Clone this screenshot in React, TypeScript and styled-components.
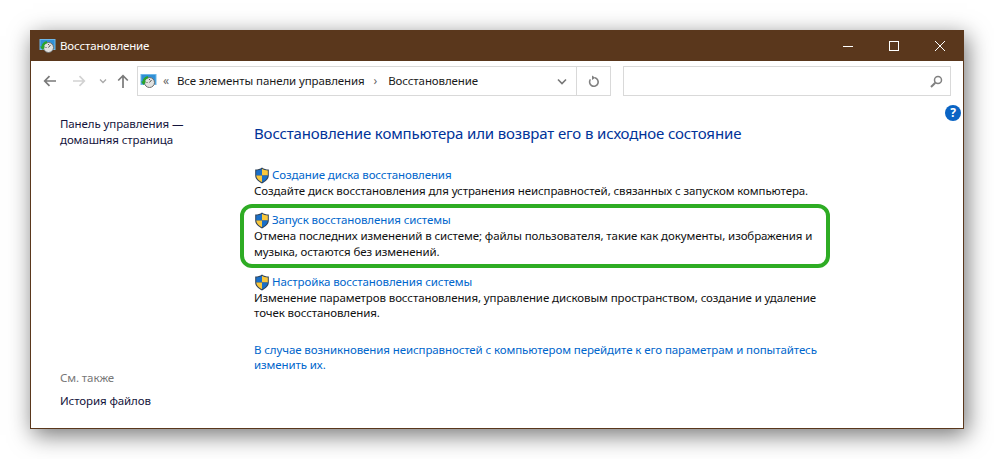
import React from "react";
import styled, { createGlobalStyle } from "styled-components";

const Global = createGlobalStyle`
  html, body { margin: 0; padding: 0; background: #fff; }
  body { width: 994px; height: 459px; overflow: hidden; font-family: "Noto Sans", "Open Sans", sans-serif; }
`;

const Page = styled.div`
  padding: 30px 30px 0;
`;

const Window = styled.div`
  width: 934px;
  height: 399px;
  box-sizing: border-box;
  display: flex;
  flex-direction: column;
  background: #fff;
  border: 1px solid #5a371c;
  border-top: 0;
  box-shadow: 3px 6px 22px rgba(0, 0, 0, 0.55);
`;

const TitleBar = styled.div`
  height: 31px;
  margin: 0 -1px;
  flex: none;
  display: flex;
  align-items: center;
  padding: 0 1px 0 9px;
  background: #5a371c;
  color: #fff;
  font-size: 11.5px;
  letter-spacing: -0.14px;
`;

const TitleText = styled.span`
  margin-left: 4px;
  flex: 1;
`;

const WinButton = styled.button`
  width: 46px;
  height: 31px;
  padding: 0;
  display: flex;
  align-items: center;
  justify-content: center;
  background: none;
  border: 0;
`;

const Toolbar = styled.div`
  height: 40px;
  flex: none;
  display: flex;
  align-items: center;
  padding: 0 12px 0 7px;
  box-sizing: border-box;
`;

const NavButton = styled.div`
  display: flex;
  align-items: center;
  justify-content: center;
  width: ${(p) => p.$w}px;
  height: 24px;
`;

const AddressBox = styled.div`
  width: 475px;
  height: 30px;
  box-sizing: border-box;
  display: flex;
  align-items: center;
  border: 1px solid #d9d9d9;
  font-size: 11.5px;
  letter-spacing: -0.1px;
  color: #1a1a1a;
`;

const Crumbs = styled.div`
  flex: 1;
  display: flex;
  align-items: center;
  padding: 0 0 1px 2px;
  min-width: 0;
`;

const CrumbSep = styled.span`
  color: #666;
  margin: 0 ${(p) => p.$l}px 0 ${(p) => p.$m}px;
  font-size: 12px;
`;

const AddressDrop = styled.div`
  width: 28px;
  height: 100%;
  display: flex;
  align-items: center;
  justify-content: center;
`;

const RefreshBtn = styled.div`
  width: 33px;
  height: 100%;
  display: flex;
  align-items: center;
  justify-content: center;
  border-left: 1px solid #d9d9d9;
`;

const SearchBox = styled.div`
  width: 328px;
  height: 30px;
  margin-left: 12px;
  box-sizing: border-box;
  display: flex;
  align-items: center;
  justify-content: flex-end;
  padding-right: 7px;
  border: 1px solid #d9d9d9;
`;

const Body = styled.div`
  flex: 1;
  display: flex;
  position: relative;
  min-height: 0;
`;

const Sidebar = styled.div`
  width: 223px;
  flex: none;
  box-sizing: border-box;
  padding: 15px 0 19px 29px;
  display: flex;
  flex-direction: column;
  font-size: 11.5px;
  letter-spacing: -0.1px;
  line-height: 16px;
  color: #14143c;
`;

const SideSpacer = styled.div`
  flex: 1;
`;

const SeeAlso = styled.div`
  color: #777;
  margin-bottom: 7px;
`;

const Main = styled.div`
  flex: 1;
  padding-top: 22px;
  font-size: 11.5px;
  letter-spacing: -0.1px;
  line-height: 16px;
  color: #111;
`;

const Heading = styled.h1`
  margin: 0 0 24px;
  font-size: 15px;
  letter-spacing: -0.14px;
  line-height: 20px;
  font-weight: 400;
  color: #003399;
`;

const Task = styled.div`
  margin-bottom: ${(p) => p.$gap}px;
`;

const TaskLink = styled.div`
  display: flex;
  align-items: center;
  gap: 2px;
  height: 16px;
  color: #0066cc;
`;

const TaskText = styled.div`
  width: 570px;
  line-height: ${(p) => p.$lh || 16}px;
`;

const Plain = styled.div`
  width: 570px;
  line-height: 15px;
  color: #0066cc;
`;

const Highlight = styled.div`
  position: absolute;
  left: 209px;
  top: 103px;
  width: 590px;
  height: 64px;
  box-sizing: border-box;
  border: 4px solid #2eac24;
  border-radius: 12px;
  pointer-events: none;
`;

const HelpIcon = styled.div`
  position: absolute;
  right: 2px;
  top: 4px;
  width: 16px;
  height: 16px;
  border-radius: 50%;
  background: #0a64c4;
  color: #fff;
  font-size: 12px;
  font-weight: 700;
  line-height: 16px;
  text-align: center;
`;

const RecoveryIcon = () => (
  <svg width="17" height="17" viewBox="0 0 17 17">
    <rect x="1" y="2.500" width="15" height="10" fill="#2f8fd6" stroke="#6fb8e8" />
    <circle cx="9.500" cy="10.500" r="5" fill="#e2e2e0" stroke="#6d6d6d" />
    <path d="M9.500 10.500l2-2.500M9.500 7v1M6.500 10.500h1" stroke="#555" />
    <path d="M8 5.200A5.600 5.600 0 0 0 3.600 10" fill="none" stroke="#2aa52a" strokeWidth="2.200" />
    <path d="M1 9.500h5.200L3.600 13z" fill="#2aa52a" />
  </svg>
);

const Shield = () => (
  <svg width="16" height="17" viewBox="0 0 16 17">
    <path d="M8 .5C6 2 4 2.600 1.200 2.600v6c0 3.600 3 6 6.800 7.900 3.800-1.900 6.800-4.300 6.800-7.900v-6C12 2.600 10 2 8 .5z" fill="#2f4258" />
    <path d="M8 1.800v6.700H2.200V3.400C4.500 3.400 6.400 2.900 8 1.800z" fill="#1a6fc8" />
    <path d="M8 1.800c1.600 1.100 3.500 1.600 5.800 1.600v5.100H8z" fill="#fac83c" />
    <path d="M2.200 8.500H8v6.700C4.900 13.600 2.500 11.600 2.200 8.500z" fill="#fac83c" />
    <path d="M8 8.500h5.800C13.500 11.600 11.100 13.600 8 15.200z" fill="#1a6fc8" />
  </svg>
);

const App: React.FC = () => (
  <>
    <Global />
    <Page>
      <Window>
        <TitleBar>
          <RecoveryIcon />
          <TitleText>Восстановление</TitleText>
          <WinButton>
            <svg width="12" height="12" viewBox="0 0 12 12"><path d="M1 6.500h10" stroke="#fff" /></svg>
          </WinButton>
          <WinButton>
            <svg width="12" height="12" viewBox="0 0 12 12"><rect x="1.500" y="1.500" width="9" height="9" fill="none" stroke="#fff" /></svg>
          </WinButton>
          <WinButton>
            <svg width="12" height="12" viewBox="0 0 12 12"><path d="M1 1l10 10M11 1L1 11" stroke="#fff" /></svg>
          </WinButton>
        </TitleBar>
        <Toolbar>
          <NavButton $w={24}>
            <svg width="14" height="12" viewBox="0 0 14 12"><path d="M13 6H2M6.500 1.200L1.700 6l4.800 4.800" fill="none" stroke="#7a7a7a" strokeWidth="1.700" /></svg>
          </NavButton>
          <NavButton $w={34}>
            <svg width="14" height="12" viewBox="0 0 14 12"><path d="M1 6h11M7.500 1.200L12.300 6l-4.800 4.800" fill="none" stroke="#d2d2d2" strokeWidth="1.700" /></svg>
          </NavButton>
          <NavButton $w={14}>
            <svg width="8" height="6" viewBox="0 0 8 6"><path d="M1 1.500l3 3 3-3" fill="none" stroke="#a8a8a8" strokeWidth="1.300" /></svg>
          </NavButton>
          <NavButton $w={27}>
            <svg width="12" height="14" viewBox="0 0 12 14"><path d="M6 14V2M1.200 6.500L6 1.700l4.800 4.800" fill="none" stroke="#7a7a7a" strokeWidth="1.700" /></svg>
          </NavButton>
          <AddressBox>
            <Crumbs>
              <RecoveryIcon />
              <CrumbSep $m={6} $l={8}>«</CrumbSep>
              <span>Все элементы панели управления</span>
              <CrumbSep $m={9} $l={11}>›</CrumbSep>
              <span>Восстановление</span>
            </Crumbs>
            <AddressDrop>
              <svg width="10" height="7" viewBox="0 0 10 7"><path d="M1 1.500l4 4 4-4" fill="none" stroke="#777" strokeWidth="1.600" /></svg>
            </AddressDrop>
            <RefreshBtn>
              <svg width="12" height="13" viewBox="0 0 12 13"><path d="M7 2.800a4.300 4.300 0 1 1-4.600 1.600" fill="none" stroke="#808080" strokeWidth="1.600" /><path d="M4 0.500v4.600l3.400-2.300z" fill="#808080" /></svg>
            </RefreshBtn>
          </AddressBox>
          <SearchBox>
            <svg width="13" height="13" viewBox="0 0 13 13"><circle cx="8" cy="5" r="3.500" fill="none" stroke="#808080" strokeWidth="1.500" /><path d="M5.300 7.700L1 12" stroke="#808080" strokeWidth="2" /></svg>
          </SearchBox>
        </Toolbar>
        <Body>
          <Sidebar>
            <span>Панель управления —<br />домашняя страница</span>
            <SideSpacer />
            <SeeAlso>См. также</SeeAlso>
            <span>История файлов</span>
          </Sidebar>
          <Main>
            <Heading>Восстановление компьютера или возврат его в исходное состояние</Heading>
            <Task $gap={13}>
              <TaskLink><Shield />Создание диска восстановления</TaskLink>
              <TaskText>Создайте диск восстановления для устранения неисправностей, связанных с запуском компьютера.</TaskText>
            </Task>
            <Task $gap={14}>
              <TaskLink><Shield />Запуск восстановления системы</TaskLink>
              <TaskText>Отмена последних изменений в системе; файлы пользователя, такие как документы, изображения и музыка, остаются без изменений.</TaskText>
            </Task>
            <Task $gap={22}>
              <TaskLink><Shield />Настройка восстановления системы</TaskLink>
              <TaskText $lh={15}>Изменение параметров восстановления, управление дисковым пространством, создание и удаление точек восстановления.</TaskText>
            </Task>
            <Plain>В случае возникновения неисправностей с компьютером перейдите к его параметрам и попытайтесь изменить их.</Plain>
          </Main>
          <Highlight />
          <HelpIcon>?</HelpIcon>
        </Body>
      </Window>
    </Page>
  </>
);

export default App;
